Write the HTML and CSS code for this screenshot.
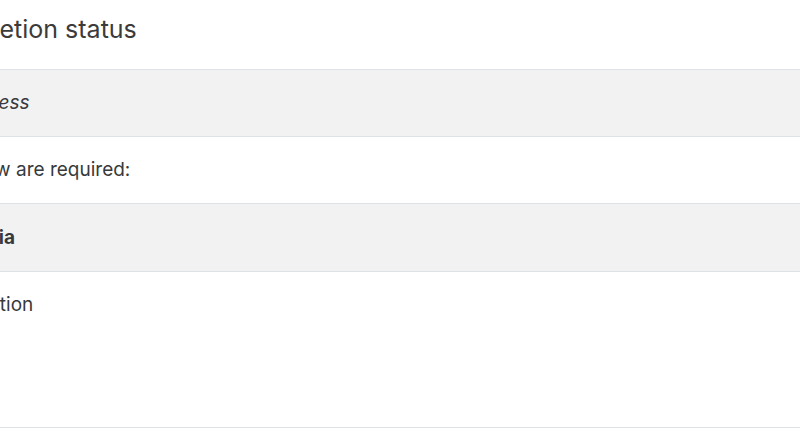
FILE: index.html
```html
<!DOCTYPE html>
<html>
  <head>
    <link rel="stylesheet" href="styles.css">
  </head>
  <body>
    <div id="block">
      <h2 class="block-title">Completion status</h2>
      <table class="status-table">
        <tr class="striped">
          <td>Status: <i>In progress</i></td>
        </tr>
        <tr>
          <td>All criteria below are required:</td>
        </tr>
        <tr class="striped">
          <td><b>Required criteria</b></td>
        </tr>
        <tr>
          <td>Activity completion</td>
        </tr>
      </table>
      <div class="block-footer"></div>
    </div>
  </body>
</html>
```

FILE: styles.css
```css
html, body {
  margin: 0;
  padding: 0;
  background-color: #fff;
  overflow: hidden;
}
body {
  font-family: Inter, "Noto Sans", sans-serif;
  color: #373a3c;
}
#block {
  margin-left: -151px;
  width: 980px;
}
.block-title {
  font-size: 25px;
  font-weight: 400;
  line-height: 32px;
  margin: 13px 0 24px 74px;
  color: #3b3b3b;
}
.status-table {
  width: 100%;
  border-collapse: collapse;
  font-size: 19px;
}
.status-table td {
  padding: 19px 12px;
  line-height: 28px;
  border-top: 1px solid #dee2e6;
  border-bottom: 1px solid #dee2e6;
}
.status-table tr.striped td {
  background-color: #f2f2f2;
}
.status-table tr:nth-child(3) td {
  padding-top: 20px;
}
.status-table tr:last-child td {
  border-bottom: none;
}
.block-footer {
  margin-top: 89px;
  border-top: 1px solid #dee2e6;
}
```
